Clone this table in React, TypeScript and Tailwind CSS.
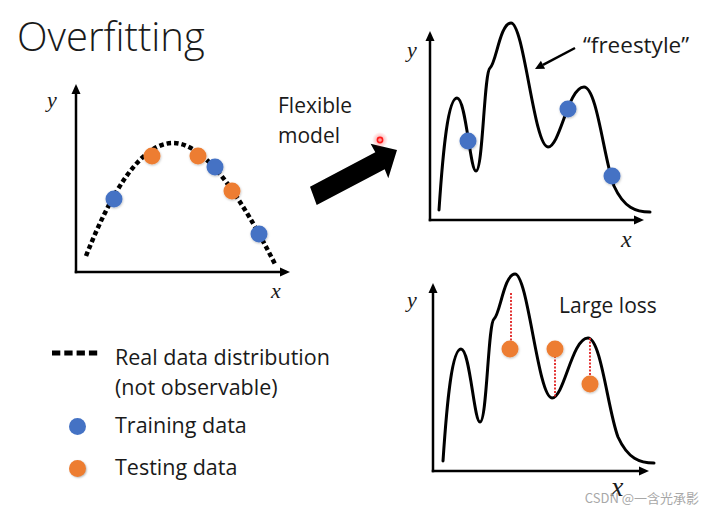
const BLUE = "#4472C4";
const ORANGE = "#ED7D31";
const INK = "#1a1a1a";

// the wiggly "flexible model" curve, drawn in top-chart coordinates
const WIGGLE =
  "M439,210 C443,150 448,98 457,98 C466,98 470,171 476,171 C483,171 484,72 490,68 C496,64 500,23 511,23 C524,23 534,147 548,147 C560,147 568,87 584,87 C597,87 604,160 614,186 C624,208 636,212 650,212";

function Dot({ cx, cy, color }: { cx: number; cy: number; color: string }) {
  return <circle cx={cx} cy={cy} r={8.5} fill={color} filter="url(#soft)" />;
}

function Axes({ ox, oy, top, right }: { ox: number; oy: number; top: number; right: number }) {
  return (
    <g>
      <line x1={ox} y1={top + 8} x2={ox} y2={oy + 1.25} stroke="#000" strokeWidth={2.5} />
      <polygon points={`${ox},${top} ${ox - 4.5},${top + 10} ${ox + 4.5},${top + 10}`} fill="#000" />
      <line x1={ox - 1.25} y1={oy} x2={right - 8} y2={oy} stroke="#000" strokeWidth={2.5} />
      <polygon points={`${right},${oy} ${right - 10},${oy - 4.5} ${right - 10},${oy + 4.5}`} fill="#000" />
    </g>
  );
}

function Defs() {
  return (
    <defs>
      <filter id="soft" x="-50%" y="-50%" width="200%" height="200%">
        <feDropShadow dx="0.5" dy="1" stdDeviation="1" floodColor="#000" floodOpacity="0.25" />
      </filter>
      <radialGradient id="laser">
        <stop offset="0%" stopColor="#ff3030" stopOpacity="0.55" />
        <stop offset="100%" stopColor="#ff4040" stopOpacity="0" />
      </radialGradient>
    </defs>
  );
}

const mathFont = { fontFamily: "'Liberation Serif', serif", fontStyle: "italic" as const };
const bodyFont = { fontFamily: "'Open Sans', sans-serif" };

export default function App() {
  return (
    <div className="relative flex h-[511px] w-[707px] overflow-hidden bg-white font-['Open_Sans',sans-serif] text-[#1a1a1a]">
      {/* left: title, true distribution, legend */}
      <div className="flex w-[278px] shrink-0 flex-col">
        <h1 className="pl-[17px] pt-[12px] text-[40px] leading-[48px] font-light">Overfitting</h1>
        <svg width={238} height={225} viewBox="40 80 238 225" className="mt-[20px] ml-[40px] overflow-visible">
          <Defs />
          <Axes ox={76} oy={272} top={84} right={290} />
          <path
            d="M86,256 C110,195 140,143 173,143 C205,143 240,195 276,266"
            fill="none"
            stroke="#000"
            strokeWidth={4.5}
            strokeDasharray="4.5 3"
          />
          <Dot cx={114} cy={199} color={BLUE} />
          <Dot cx={152} cy={156} color={ORANGE} />
          <Dot cx={198} cy={156} color={ORANGE} />
          <Dot cx={215} cy={167} color={BLUE} />
          <Dot cx={232} cy={191} color={ORANGE} />
          <Dot cx={259} cy={234} color={BLUE} />
          <text x={47} y={107} fontSize={22} fill={INK} style={mathFont}>y</text>
          <text x={271} y={298} fontSize={22} fill={INK} style={mathFont}>x</text>
        </svg>

        <div className="mt-[37px] flex flex-col whitespace-nowrap text-[21.5px] leading-[30px]">
          <div className="flex">
            <div className="w-[115px] shrink-0 pl-[52px] pt-[8px]">
              <svg width={46} height={6} className="block">
                <line x1={0} y1={3} x2={46} y2={3} stroke="#000" strokeWidth={5} strokeDasharray="8.3 4" />
              </svg>
            </div>
            <p>
              Real data distribution
              <br />
              (not observable)
            </p>
          </div>
          <div className="mt-[8px] flex">
            <div className="w-[115px] shrink-0 pl-[69px] pt-[8px]">
              <span className="block h-[17px] w-[17px] rounded-full bg-[#4472C4]" />
            </div>
            <p>Training data</p>
          </div>
          <div className="mt-[12px] flex">
            <div className="w-[115px] shrink-0 pl-[69px] pt-[8px]">
              <span className="block h-[17px] w-[17px] rounded-full bg-[#ED7D31] shadow-[1px_1px_2px_rgba(0,0,0,0.25)]" />
            </div>
            <p>Testing data</p>
          </div>
        </div>
      </div>

      {/* middle: flexible model arrow */}
      <div className="flex w-[122px] shrink-0 flex-col">
        <p className="pt-[90px] text-[21px] leading-[30px]">
          Flexible
          <br />
          model
        </p>
        <svg width={100} height={75} viewBox="300 135 100 75" className="-mt-[15px] ml-[22px] overflow-visible">
          <Defs />
          <polygon
            points="310,186.7 375.3,152.3 370.6,143.8 397,150 388.3,178.3 384.7,169.3 316.7,205"
            fill="#000"
          />
          <circle cx={380} cy={140} r={8} fill="url(#laser)" />
          <circle cx={380} cy={140} r={2.6} fill="none" stroke="#ff1a1a" strokeWidth={1.6} />
        </svg>
      </div>

      {/* right: fitted curve on training and testing data */}
      <div className="flex w-[307px] shrink-0 flex-col">
        <svg width={307} height={255} viewBox="400 0 307 255" className="block">
          <Defs />
          <Axes ox={430} oy={220} top={31} right={644} />
          <path d={WIGGLE} fill="none" stroke="#000" strokeWidth={3} strokeLinecap="round" />
          <Dot cx={468} cy={141} color={BLUE} />
          <Dot cx={568} cy={109} color={BLUE} />
          <Dot cx={612} cy={176} color={BLUE} />
          <line x1={575} y1={48} x2={543} y2={64.8} stroke="#000" strokeWidth={2.5} />
          <polygon points="535,69 545.1,68.8 540.9,60.8" fill="#000" />
          <text x={407} y={57} fontSize={22} fill={INK} style={mathFont}>y</text>
          <text x={621} y={247} fontSize={24} fill={INK} style={mathFont}>x</text>
          <text x={583} y={53} fontSize={22.5} fill={INK} style={bodyFont}>“freestyle”</text>
        </svg>
        <svg width={307} height={256} viewBox="400 255 307 256" className="block">
          <Defs />
          <Axes ox={433} oy={471} top={283} right={649} />
          <g transform="translate(4,251)">
            <path d={WIGGLE} fill="none" stroke="#000" strokeWidth={3} strokeLinecap="round" />
          </g>
          <g stroke="#e02020" strokeWidth={1.8} strokeDasharray="2 1.5">
            <line x1={511} y1={293} x2={511} y2={349} />
            <line x1={555} y1={349} x2={555} y2={398} />
            <line x1={590} y1={338} x2={590} y2={384} />
          </g>
          <Dot cx={510} cy={349} color={ORANGE} />
          <Dot cx={555} cy={349} color={ORANGE} />
          <Dot cx={590} cy={384} color={ORANGE} />
          <text x={407} y={307} fontSize={22} fill={INK} style={mathFont}>y</text>
          <text x={611} y={496} fontSize={28} fill={INK} style={mathFont}>x</text>
          <text x={559} y={313} fontSize={21} fill={INK} style={bodyFont}>Large loss</text>
        </svg>
      </div>

      <span className="absolute right-[8px] bottom-[5px] font-['Noto_Sans_CJK_SC',sans-serif] text-[13px] leading-[16px] text-[#a8a8a8]">
        CSDN @一含光承影
      </span>
    </div>
  );
}
